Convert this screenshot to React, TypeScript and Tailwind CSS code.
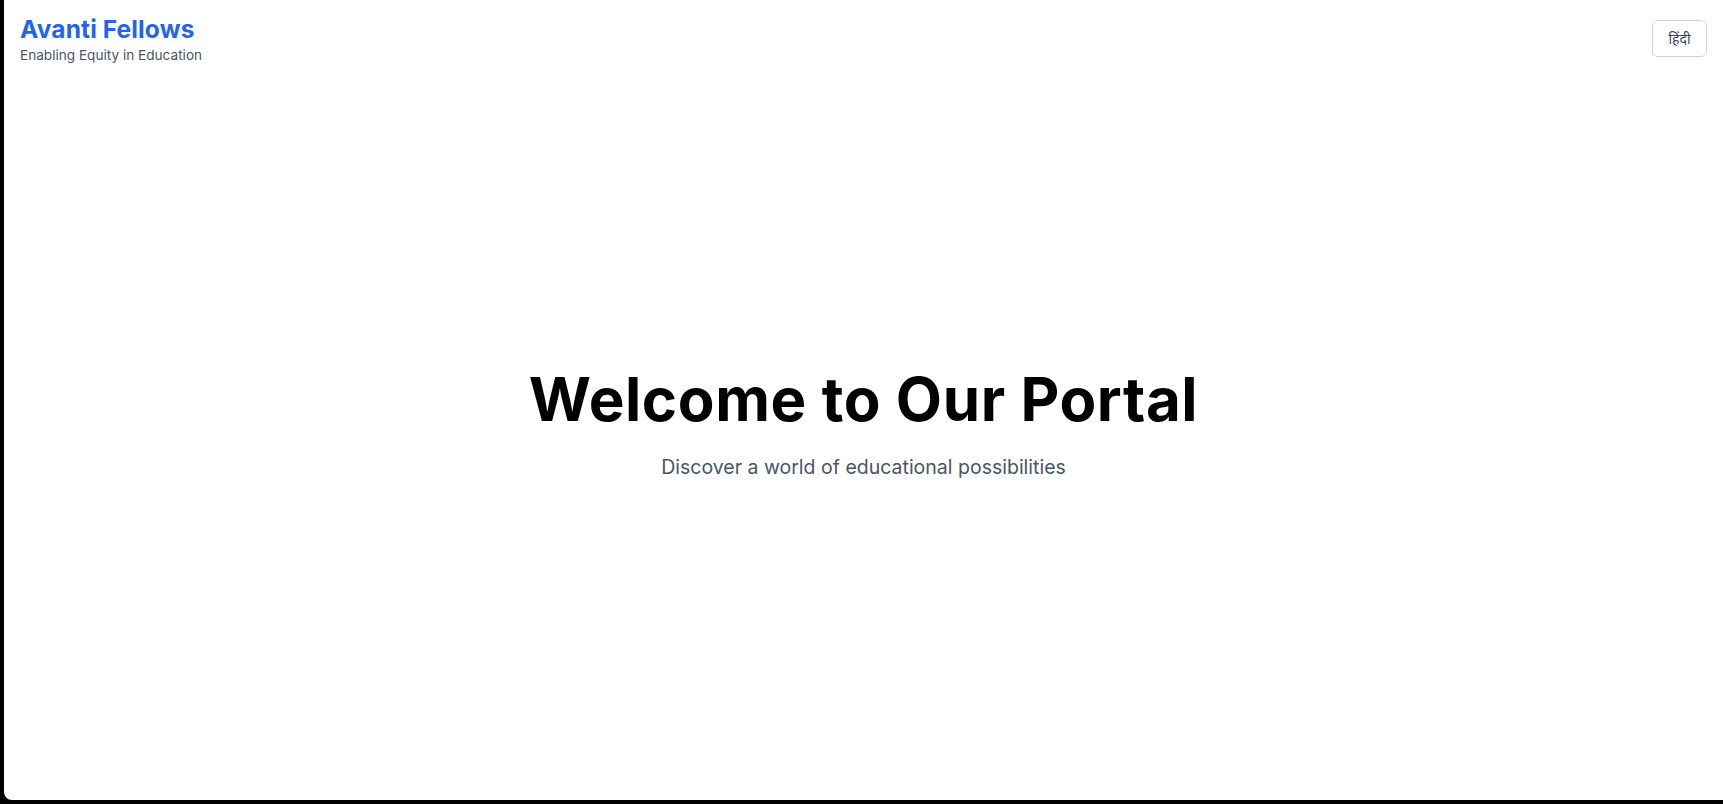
import React from 'react';

const App = () => {
  return (
    <div className="h-screen w-full bg-black pl-1 pb-1" style={{ fontFamily: 'Inter, "Noto Sans", sans-serif' }}>
      <div className="flex h-full flex-col rounded-bl-lg bg-white">
        {/* Header */}
        <header className="flex items-start justify-between px-4 pt-3">
          <div>
            <h1 className="mt-[1px] text-[24.5px] font-bold leading-8 tracking-[0.005em] text-[#2563eb]">Avanti Fellows</h1>
            <p className="text-[13.6px] leading-5 text-gray-600">Enabling Equity in Education</p>
          </div>
          <button className="mt-2 h-[37px] w-[55px] rounded-md border border-gray-300 text-sm text-gray-700" style={{ fontFamily: '"Noto Sans", sans-serif' }}>
            हिंदी
          </button>
        </header>

        {/* Hero */}
        <main className="flex flex-1 flex-col items-center justify-center pb-[14px]">
          <h2 className="text-6xl font-bold tracking-[0.01em] text-black">Welcome to Our Portal</h2>
          <p className="mt-6 text-[19.5px] text-gray-600">Discover a world of educational possibilities</p>
        </main>
      </div>
    </div>
  );
};

export default App;
